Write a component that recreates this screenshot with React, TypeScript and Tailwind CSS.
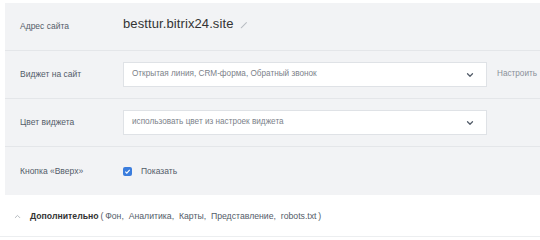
import { ChevronDown, ChevronUp } from 'lucide-react'

const font = { fontFamily: '"Helvetica Neue", "Liberation Sans", Arial, sans-serif' }

const Row = ({ label, children, last }: { label: string; children: React.ReactNode; last?: boolean }) => (
  <div className={`flex items-center h-[48px] ${last ? '' : 'border-b border-[#e4e6e9]'}`}>
    <div className="w-[118px] shrink-0 pl-[15px] text-[8.5px] text-[#535c69]">{label}</div>
    <div className="flex-1 flex items-center">{children}</div>
  </div>
)

const Select = ({ value }: { value: string }) => (
  <div className="w-[364px] shrink-0 h-[25px] bg-white border border-[#dfe2e6] flex items-center justify-between pl-[8px] pr-[11px] text-[8.2px] text-[#7c828a]">
    <span>{value}</span>
    <ChevronDown className="w-[10px] h-[10px] text-[#535c69]" strokeWidth={3} />
  </div>
)

export default function App() {
  return (
    <div className="w-[540px] h-[240px] bg-white pt-[3px] pl-[5px]" style={font}>
      <div className="bg-[#f2f3f5] h-[192px]">
        <Row label="Адрес сайта">
          <span className="text-[13px] text-[#333] tracking-[0.1px] -mt-[6px]">besttur.bitrix24.site</span>
          <svg width="8" height="8" viewBox="0 0 10 10" className="ml-[6px] -mt-[4px]">
            <path d="M1.5 8.5 L8 2" stroke="#b8bcc2" strokeWidth="1.3" strokeLinecap="round" />
          </svg>
        </Row>
        <Row label="Виджет на сайт">
          <Select value="Открытая линия, CRM-форма, Обратный звонок" />
          <span className="ml-[10px] text-[8.2px] text-[#8a9099]">Настроить</span>
        </Row>
        <Row label="Цвет виджета">
          <Select value="использовать цвет из настроек виджета" />
        </Row>
        <Row label="Кнопка «Вверх»" last>
          <div className="w-[9px] h-[9px] rounded-[2px] bg-[#3b7ddd] flex items-center justify-center">
            <svg width="7" height="7" viewBox="0 0 8 8">
              <path d="M1.5 4.2 L3.2 5.8 L6.5 2.2" stroke="white" strokeWidth="1.3" fill="none" />
            </svg>
          </div>
          <span className="ml-[9px] text-[8.5px] text-[#535c69]">Показать</span>
        </Row>
      </div>
      <div className="h-[42px] flex items-center pt-[2px] border-b border-[#eceef0] -ml-[5px] pl-[13px] text-[8.7px] text-[#535c69]">
        <ChevronUp className="w-[9px] h-[9px] text-[#b0b5bb]" strokeWidth={2.5} />
        <span className="ml-[8px] font-bold text-[#333]">Дополнительно</span>
        <span className="ml-[2px]">(&thinsp;Фон,&nbsp; Аналитика,&nbsp; Карты,&nbsp; Представление,&nbsp; robots.txt&thinsp;)</span>
      </div>
    </div>
  )
}
